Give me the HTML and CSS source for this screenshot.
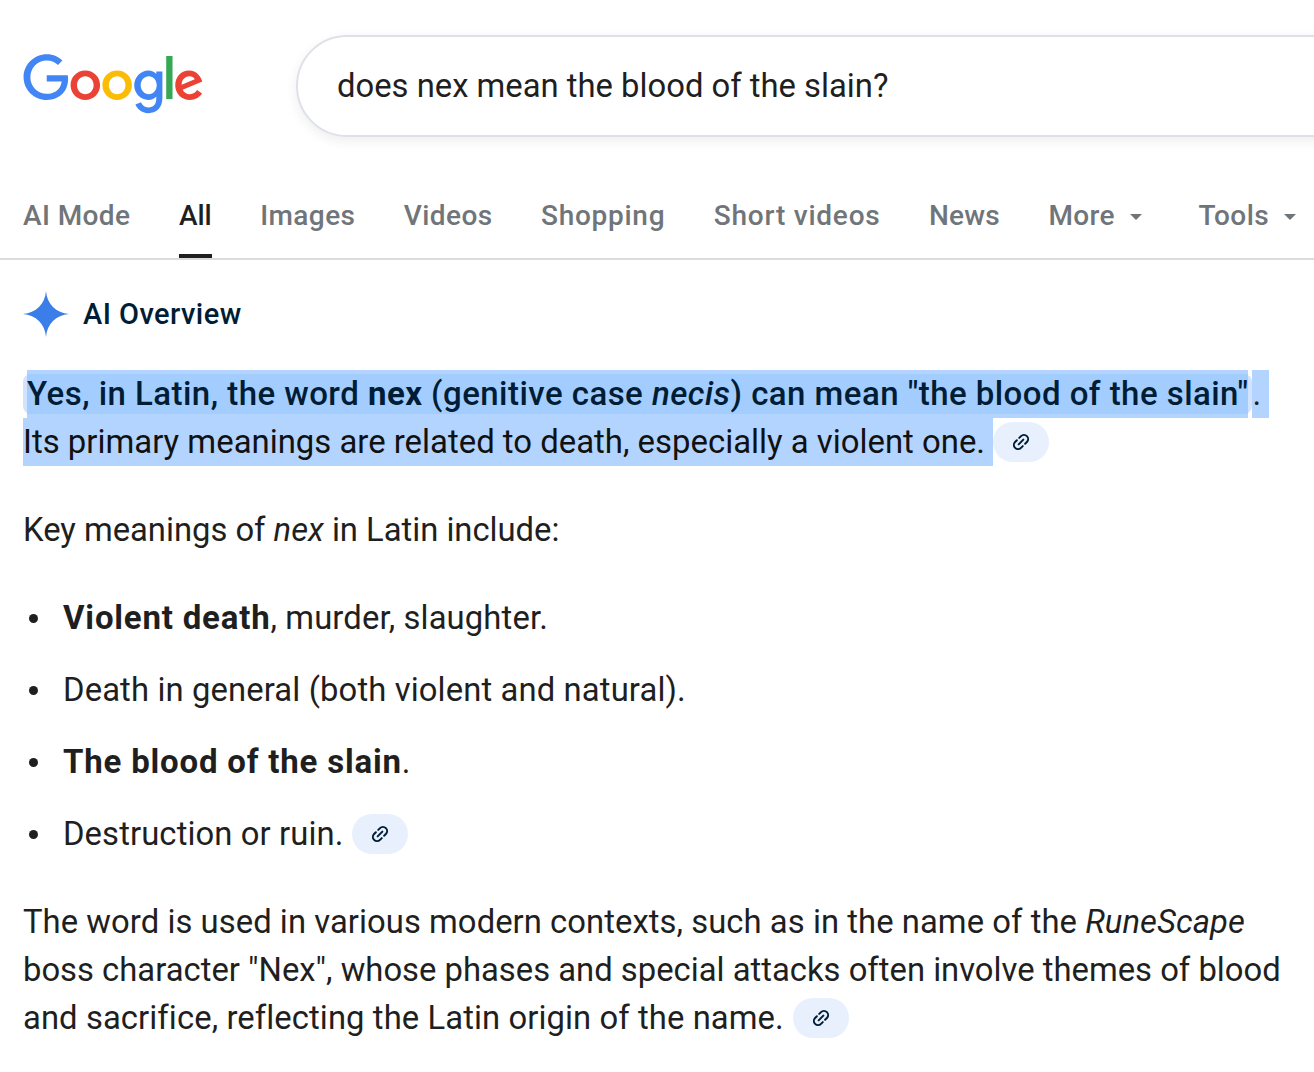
FILE: index.html
```html
<!DOCTYPE html>
<html lang="en">
<head>
    <meta charset="UTF-8">
    <meta name="viewport" content="width=device-width, initial-scale=1.0">
    <title>does nex mean the blood of the slain? - Google Search</title>
    <link rel="stylesheet" href="styles.css">
</head>
<body>
    <div class="header">
        <svg class="logo" viewBox="0 0 272 92" aria-label="Google" role="img">
            <path fill="#EA4335" d="M115.75 47.18c0 12.77-9.99 22.18-22.25 22.18s-22.25-9.41-22.25-22.18C71.25 34.32 81.24 25 93.5 25s22.25 9.32 22.25 22.18zm-9.74 0c0-7.98-5.79-13.44-12.51-13.44S80.99 39.2 80.99 47.18c0 7.9 5.79 13.44 12.51 13.44s12.51-5.55 12.51-13.44z"/>
            <path fill="#FBBC05" d="M163.75 47.18c0 12.77-9.99 22.18-22.25 22.18s-22.25-9.41-22.25-22.18c0-12.85 9.99-22.18 22.25-22.18s22.25 9.32 22.25 22.18zm-9.74 0c0-7.98-5.79-13.44-12.51-13.44s-12.51 5.46-12.51 13.44c0 7.9 5.79 13.44 12.51 13.44s12.51-5.55 12.51-13.44z"/>
            <path fill="#4285F4" d="M209.75 26.34v39.82c0 16.38-9.66 23.07-21.08 23.07-10.75 0-17.22-7.19-19.66-13.07l8.48-3.53c1.51 3.61 5.21 7.87 11.17 7.87 7.31 0 11.84-4.51 11.84-13v-3.19h-.34c-2.18 2.69-6.38 5.04-11.68 5.04-11.09 0-21.25-9.66-21.25-22.09 0-12.52 10.16-22.26 21.25-22.26 5.29 0 9.49 2.35 11.68 4.96h.34v-3.61h9.25zm-8.56 20.92c0-7.81-5.21-13.52-11.84-13.52-6.72 0-12.35 5.71-12.35 13.52 0 7.73 5.63 13.36 12.35 13.36 6.63 0 11.84-5.63 11.84-13.36z"/>
            <path fill="#34A853" d="M225 3v65h-9.5V3h9.5z"/>
            <path fill="#EA4335" d="M262.02 54.48l7.56 5.04c-2.44 3.61-8.32 9.83-18.48 9.83-12.6 0-22.01-9.74-22.01-22.18 0-13.19 9.49-22.18 20.92-22.18 11.51 0 17.14 9.16 18.98 14.11l1.01 2.52-29.65 12.28c2.27 4.45 5.8 6.72 10.75 6.72 4.96 0 8.4-2.44 10.92-6.14zm-23.27-7.98l19.82-8.23c-1.09-2.77-4.37-4.7-8.23-4.7-4.95 0-11.84 4.37-11.59 12.93z"/>
            <path fill="#4285F4" d="M35.29 41.41V32H67c.31 1.64.47 3.58.47 5.68 0 7.06-1.93 15.79-8.15 22.01-6.05 6.3-13.78 9.66-24.02 9.66C16.32 69.35.36 53.89.36 34.91.36 15.93 16.32.47 35.3.47c10.5 0 17.98 4.12 23.6 9.49l-6.64 6.64c-4.03-3.78-9.49-6.72-16.97-6.72-13.86 0-24.7 11.17-24.7 25.03 0 13.86 10.84 25.03 24.7 25.03 8.99 0 14.11-3.61 17.39-6.89 2.66-2.66 4.41-6.46 5.1-11.65l-22.49.01z"/>
        </svg>
        <div class="search-box">does nex mean the blood of the slain?</div>
    </div>

    <div class="tabs">
        <a class="tab">AI Mode</a>
        <a class="tab active">All</a>
        <a class="tab">Images</a>
        <a class="tab">Videos</a>
        <a class="tab shopping">Shopping</a>
        <a class="tab wide">Short videos</a>
        <a class="tab news">News</a>
        <a class="tab">More<span class="caret"></span></a>
        <a class="tab tools">Tools<span class="caret"></span></a>
    </div>

    <div class="content">
        <div class="ai-title">
            <svg class="spark" viewBox="0 0 46 46"><path fill="#3b7de9" d="M23 0C24 13 33 22 46 23 33 24 24 33 23 46 22 33 13 24 0 23 13 22 22 13 23 0Z"/></svg>
            <span>AI Overview</span>
        </div>

        <div class="answer">
            <div class="line first"><span class="mark"><span class="sel">Yes, in Latin, the word <b>nex</b> (genitive case <i>necis</i>) can mean "the blood of the slain"</span></span><span class="sel-tail">.</span></div>
            <div class="line"><span class="sel-plain">Its primary meanings are related to death, especially a violent one.</span><span class="chip"><svg viewBox="0 0 24 24"><g fill="none" stroke="#001d35" stroke-width="2.4" stroke-linecap="round" transform="rotate(-45 12 12)"><path d="M10 7H7a5 5 0 0 0 0 10h3"/><path d="M14 7h3a5 5 0 0 1 0 10h-3"/><path d="M8 12h8"/></g></svg></span></div>
        </div>

        <p class="para narrow">Key meanings of <i>nex</i> in Latin include:</p>

        <ul class="list">
            <li class="loose"><b>Violent death</b>, murder, slaughter.</li>
            <li class="loose">Death in general (both violent and natural).</li>
            <li><b>The blood of the slain</b>.</li>
            <li>Destruction or ruin.<span class="chip"><svg viewBox="0 0 24 24"><g fill="none" stroke="#001d35" stroke-width="2.4" stroke-linecap="round" transform="rotate(-45 12 12)"><path d="M10 7H7a5 5 0 0 0 0 10h3"/><path d="M14 7h3a5 5 0 0 1 0 10h-3"/><path d="M8 12h8"/></g></svg></span></li>
        </ul>

        <p class="para"><span class="slight">The word is used in various modern contexts, such as in the name of the <i>RuneScape</i></span><br><span class="even">boss character "Nex", whose phases and special attacks often involve themes of blood</span><br><span class="end-line">and sacrifice, reflecting the Latin origin of the name.</span><span class="chip"><svg viewBox="0 0 24 24"><g fill="none" stroke="#001d35" stroke-width="2.4" stroke-linecap="round" transform="rotate(-45 12 12)"><path d="M10 7H7a5 5 0 0 0 0 10h3"/><path d="M14 7h3a5 5 0 0 1 0 10h-3"/><path d="M8 12h8"/></g></svg></span></p>
    </div>
</body>
</html>
```
FILE: styles.css
```css
* { margin: 0; padding: 0; box-sizing: border-box; }
html, body { background: #fff; overflow: hidden; }
body { font-family: Roboto, "Liberation Sans", sans-serif; color: #1f1f1f; height: 1072px; }

.header { display: flex; align-items: center; padding: 35px 0 0 23px; height: 137px; }
.logo { width: 181px; height: 61px; flex: none; margin-right: 92px; margin-top: -4px; }
.search-box { flex: 1; height: 102px; margin-right: -60px; border: 2px solid #dfe1e8; border-radius: 51px; box-shadow: 0 4px 12px rgba(32,33,36,0.08); padding: 0 0 0 39px; display: flex; align-items: center; font-size: 32.8px; color: #1f1f1f; }

.tabs { display: flex; height: 123px; padding: 0 0 0 23px; border-bottom: 2px solid #dadce0; }
.tab { display: flex; align-items: center; height: 121px; padding-top: 40px; margin-right: 48.5px; font-size: 28px; font-weight: 500; letter-spacing: 0.4px; color: #70757a; white-space: nowrap; border-bottom: 4px solid transparent; }
.tab.wide { letter-spacing: 0.78px; }
.tab.shopping { letter-spacing: 0.72px; }
.tab.news { letter-spacing: 0.2px; }
.tab.active { color: #1f1f1f; border-bottom-color: #1f1f1f; letter-spacing: 0; }
.tab.tools { margin-right: 0; margin-left: 8px; }
.caret { display: inline-block; width: 0; height: 0; margin-left: 15px; margin-top: 2px; border-left: 6px solid transparent; border-right: 6px solid transparent; border-top: 6px solid #70757a; }

.content { padding: 31px 0 0 23px; }
.ai-title { display: flex; align-items: center; height: 46px; gap: 14px; font-size: 29px; font-weight: 500; letter-spacing: 0.45px; color: #001d35; }
.spark { width: 46px; height: 46px; }

.answer { margin-top: 33px; font-size: 32.9px; line-height: 48px; }
.answer .line.first { font-size: 33px; letter-spacing: 0.46px; }
.line { display: flex; height: 48px; white-space: nowrap; }
.mark { display: block; height: 40px; margin-top: 4px; padding: 0 4px; background: #d3e3fd; border-radius: 8px; color: #001d35; font-weight: 500; }
.sel { display: block; height: 48px; margin-top: -4px; background: linear-gradient(to bottom, #b3d4ff 4px, #a3cdff 4px, #a3cdff 44px, #b3d4ff 44px); }
.sel-tail { display: block; width: 17px; background: #b3d4ff; }
.sel-plain { display: block; background: #b3d4ff; padding-right: 8px; color: #111; }

.chip { display: inline-flex; align-items: center; justify-content: center; width: 56px; height: 40px; margin: 4px 0 0 9px; border-radius: 20px; background: #e8f0fe; vertical-align: top; }
.line .chip { margin-left: 0; }
.chip svg { width: 20px; height: 20px; }

b { font-size: 33px; letter-spacing: 0.8px; }
.first b { letter-spacing: 0.46px; }

.para { font-size: 32.8px; line-height: 48px; margin-top: 40px; }
.list { list-style: none; font-size: 32.8px; line-height: 48px; margin-top: 40px; }
.list li { position: relative; padding-left: 40px; margin-bottom: 24px; white-space: nowrap; }
.list li::before { content: ""; position: absolute; left: 6px; top: 20px; width: 9px; height: 9px; border-radius: 50%; background: #1f1f1f; }
.list li:last-child { margin-bottom: 0; letter-spacing: 0.1px; }

.narrow { letter-spacing: -0.02px; }
.even { letter-spacing: 0; }
.slight { letter-spacing: 0.05px; }
.loose { letter-spacing: 0.12px; }
.end-line { letter-spacing: 0.085px; }
```
